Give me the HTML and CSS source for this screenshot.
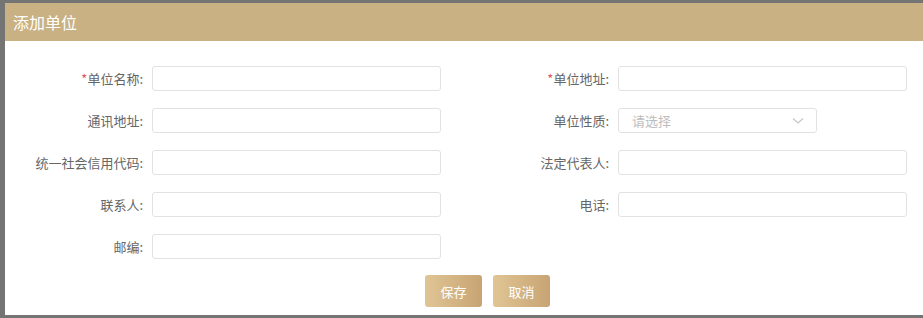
FILE: index.html
```html
<!DOCTYPE html>
<html>
<head>
  <meta charset="utf-8">
  <title>添加单位</title>
  <link rel="stylesheet" href="styles.css">
</head>
<body>
  <div class="dialog">
    <div class="dialog-header">添加单位</div>
    <div class="dialog-body">
      <div class="form">
        <div class="field">
          <label><span class="req">*</span>单位名称:</label>
          <input type="text">
        </div>
        <div class="field">
          <label><span class="req">*</span>单位地址:</label>
          <input type="text">
        </div>
        <div class="field">
          <label>通讯地址:</label>
          <input type="text">
        </div>
        <div class="field">
          <label>单位性质:</label>
          <div class="select">
            <span>请选择</span>
            <svg width="12" height="8" viewBox="0 0 12 8"><path d="M1 1.5 L6 6 L11 1.5" fill="none" stroke="#c0c4cc" stroke-width="1.1"/></svg>
          </div>
        </div>
        <div class="field">
          <label>统一社会信用代码:</label>
          <input type="text">
        </div>
        <div class="field">
          <label>法定代表人:</label>
          <input type="text">
        </div>
        <div class="field">
          <label>联系人:</label>
          <input type="text">
        </div>
        <div class="field">
          <label>电话:</label>
          <input type="text">
        </div>
        <div class="field">
          <label>邮编:</label>
          <input type="text">
        </div>
      </div>
      <div class="actions">
        <button class="btn">保存</button>
        <button class="btn">取消</button>
      </div>
    </div>
  </div>
</body>
</html>
```

FILE: styles.css
```css
* {
  margin: 0;
  padding: 0;
  box-sizing: border-box;
}

body {
  background: #747474;
  font-family: "Noto Sans CJK SC", "Noto Sans", sans-serif;
  overflow: hidden;
  height: 318px;
}

.dialog {
  height: 312px;
  margin: 3px 0 0 5px;
  background: #fff;
}

.dialog-header {
  height: 38px;
  line-height: 38px;
  padding-left: 8px;
  background: #c9b184;
  color: #fff;
  font-size: 16px;
}

.dialog-body {
  padding-top: 25px;
}

.form {
  display: grid;
  grid-template-columns: 466px 1fr;
  row-gap: 17px;
}

.field {
  display: flex;
  align-items: center;
  gap: 9px;
}

.field label {
  width: 138px;
  text-align: right;
  font-size: 13px;
  color: #666;
}

.req {
  color: #e0565b;
}

.field input,
.select {
  width: 289px;
  height: 25px;
  border: 1px solid #e2e2e2;
  border-radius: 3px;
  background: #fff;
  outline: none;
}

.select {
  width: 199px;
  display: flex;
  align-items: center;
  justify-content: space-between;
  padding: 0 12px 0 13px;
  font-size: 13px;
  color: #bdbdbd;
}

.actions {
  display: flex;
  justify-content: center;
  gap: 11px;
  margin-top: 16px;
  padding-left: 47px;
}

.btn {
  width: 57px;
  height: 32px;
  border: none;
  border-radius: 3px;
  background: linear-gradient(90deg, #e0c594 0%, #c8a474 100%);
  color: #fff;
  font-family: inherit;
  font-size: 13px;
}
```
